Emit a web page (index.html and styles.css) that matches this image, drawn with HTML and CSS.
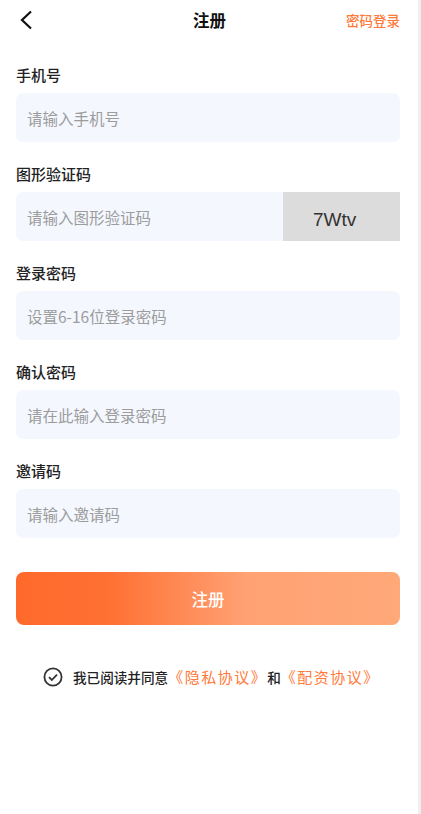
FILE: index.html
```html
<!DOCTYPE html>
<html>
	<head>
		<meta charset="UTF-8">
		<title>注册</title>
		<link rel="stylesheet" href="styles.css">
	</head>
	<body>
		<div class="page">
			<div class="header">
				<span class="back">
					<svg width="14" height="20" viewBox="0 0 14 20"><path d="M12 1.5 L3 10 L12 18.5" fill="none" stroke="#111" stroke-width="2.2"/></svg>
				</span>
				<span class="title">注册</span>
				<span class="login">密码登录</span>
			</div>

			<div class="form">
				<div class="field">
					<div class="label">手机号</div>
					<input class="input" type="text" placeholder="请输入手机号">
				</div>
				<div class="field">
					<div class="label">图形验证码</div>
					<div class="row">
						<input class="input code-input" type="text" placeholder="请输入图形验证码">
						<div class="captcha">7Wtv</div>
					</div>
				</div>
				<div class="field">
					<div class="label">登录密码</div>
					<input class="input" type="password" placeholder="设置6-16位登录密码">
				</div>
				<div class="field">
					<div class="label">确认密码</div>
					<input class="input" type="password" placeholder="请在此输入登录密码">
				</div>
				<div class="field">
					<div class="label">邀请码</div>
					<input class="input" type="text" placeholder="请输入邀请码">
				</div>

				<button class="btn">注册</button>

				<div class="agree">
					<svg width="20" height="20" viewBox="0 0 20 20"><circle cx="10" cy="10" r="8.6" fill="none" stroke="#333" stroke-width="1.8"/><path d="M6 10.2 L8.8 13 L14 7.6" fill="none" stroke="#333" stroke-width="1.8"/></svg>
					<span class="agree-text">我已阅读并同意<a class="link">《隐私协议》</a>和<a class="link">《配资协议》</a></span>
				</div>
			</div>
		</div>
	</body>
</html>
```

FILE: styles.css
```css
*{
    margin: 0;
    padding: 0;
    box-sizing: border-box;
}
body{
    background: #efefef;
    font-family: "Noto Sans CJK SC", "Noto Sans", sans-serif;
    color: #222;
}
.page{
    width: 418px;
    min-height: 814px;
    background: #fff;
}
.header{
    height: 40px;
    display: flex;
    align-items: center;
    justify-content: space-between;
    padding: 0 18px 0 19px;
}
.back{
    display: flex;
    width: 60px;
}
.title{
    font-size: 16.5px;
    font-weight: bold;
    color: #111;
}
.login{
    width: 60px;
    text-align: right;
    font-size: 13.5px;
    font-weight: 500;
    color: #ff7a3a;
    white-space: nowrap;
}
.form{
    padding: 25px 18px 0 16px;
}
.field{
    margin-bottom: 22px;
}
.label{
    font-size: 15px;
    line-height: 20px;
    font-weight: 500;
    margin-bottom: 8px;
}
.input{
    display: block;
    width: 100%;
    height: 49px;
    border: none;
    outline: none;
    border-radius: 7px;
    background: #f4f7fe;
    padding: 0 11px;
    font-family: "Noto Sans CJK SC", "Noto Sans", sans-serif;
    font-size: 15.5px;
    color: #222;
}
.input::placeholder{
    color: #9c9c9c;
}
.row{
    display: flex;
}
.code-input{
    flex: 1;
    border-radius: 7px 0 0 7px;
}
.captcha{
    width: 117px;
    height: 49px;
    background: #dcdcdc;
    font-family: "Liberation Sans", Arial, sans-serif;
    font-size: 19px;
    color: #333;
    padding: 17px 0 0 30px;
}
.btn{
    display: block;
    width: 100%;
    height: 53px;
    margin-top: 34px;
    border: none;
    border-radius: 8px;
    background: linear-gradient(90deg, #ff6a2b 0%, #ff7033 24%, #ffa173 60%, #ffa878 100%);
    color: #fff;
    font-family: "Noto Sans CJK SC", "Noto Sans", sans-serif;
    font-size: 16.5px;
    font-weight: 500;
}
.agree{
    display: flex;
    align-items: center;
    margin-top: 41px;
    padding-left: 27px;
}
.agree svg{
    flex: none;
}
.agree-text{
    margin-left: 10px;
    font-size: 13.6px;
    font-weight: 500;
    color: #222;
}
.link{
    color: #ff7a3a;
    font-weight: 400;
    font-size: 15px;
    letter-spacing: 1.5px;
}
```
